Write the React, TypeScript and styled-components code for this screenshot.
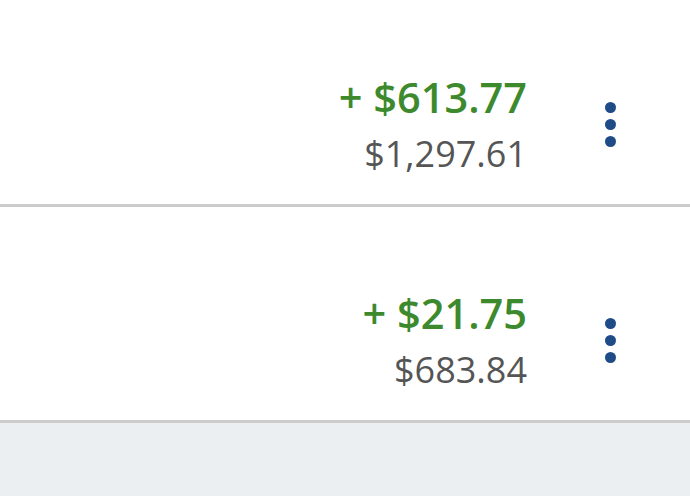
import { FC } from 'react';
import styled, { createGlobalStyle } from 'styled-components';

const rows = [
  { change: '+ $613.77', total: '$1,297.61' },
  { change: '+ $21.75', total: '$683.84' },
];

const App: FC = () => (
  <>
    <GlobalStyle />
    <List>
      { rows.map(row => (
        <Row key={ row.total }>
          <Amounts>
            <Change>{ row.change }</Change>
            <Total>{ row.total }</Total>
          </Amounts>
          <MenuButton aria-label="More">
            <Dot />
            <Dot />
            <Dot />
          </MenuButton>
        </Row>
      )) }
    </List>
  </>
);

const GlobalStyle = createGlobalStyle`
  html, body {
    margin: 0;
    height: 100%;
    background: #ebeff2;
    font-family: "Open Sans", "Liberation Sans", sans-serif;
    overflow: hidden;
  }
`;

const List = styled.div`
  display: flex;
  flex-direction: column;
  margin-top: -9px;
`;

const Row = styled.div`
  display: flex;
  align-items: center;
  justify-content: flex-end;
  box-sizing: border-box;
  height: 216px;
  padding-top: 53px;
  background: #fff;
  border-bottom: 3px solid #cccccc;
`;

const Amounts = styled.div`
  display: flex;
  flex-direction: column;
  align-items: flex-end;
  gap: 10px;
  margin-right: 3px;
`;

const Change = styled.div`
  color: #3d8a2e;
  font-size: 41.5px;
  font-weight: 600;
  line-height: 1.2;
`;

const Total = styled.div`
  color: #555555;
  font-size: 36px;
  line-height: 1.2;
`;

const MenuButton = styled.div`
  display: flex;
  flex-direction: column;
  align-items: center;
  gap: 6px;
  width: 160px;
`;

const Dot = styled.span`
  width: 11px;
  height: 11px;
  border-radius: 50%;
  background: #1f4c87;
`;

export default App;
